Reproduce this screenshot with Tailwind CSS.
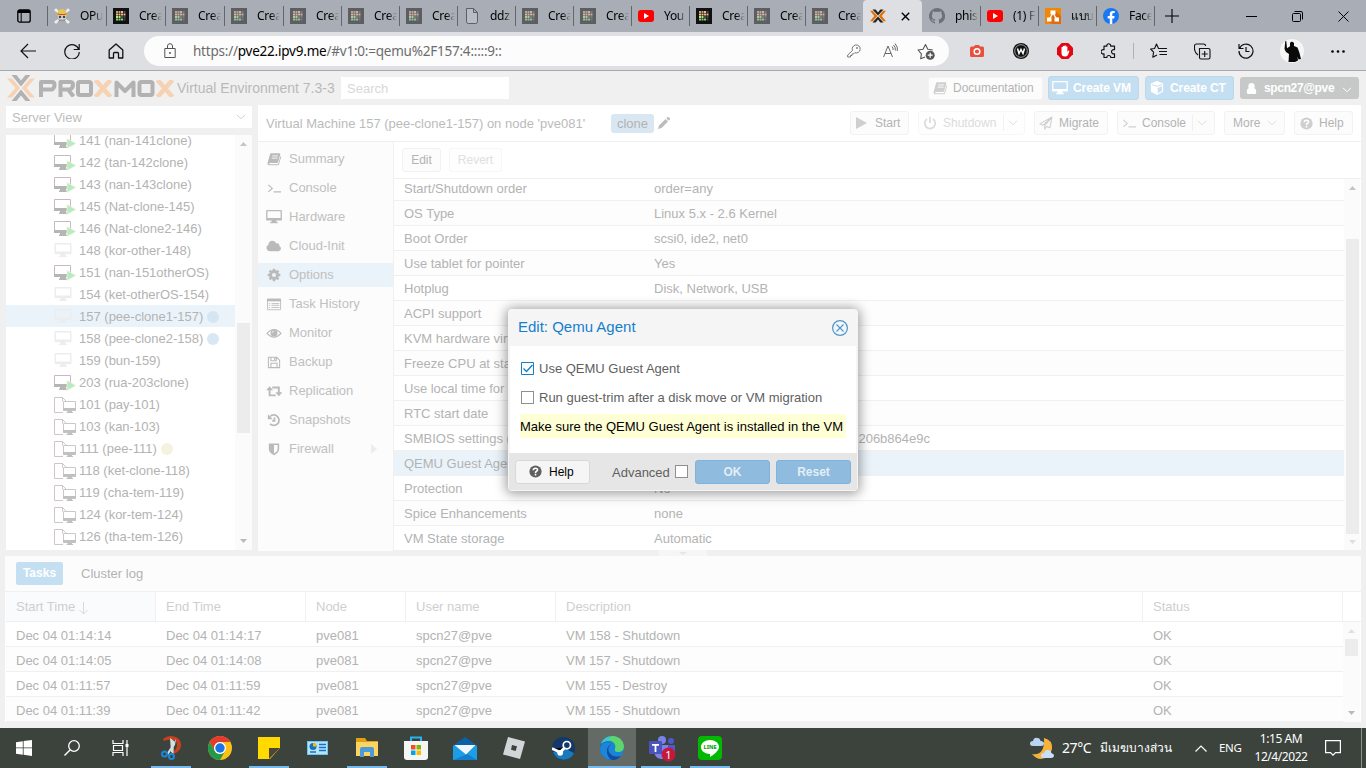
<!DOCTYPE html>
<html lang="en">
<head>
<meta charset="utf-8">
<title>pve081 - Proxmox Virtual Environment</title>
<script src="https://cdn.jsdelivr.net/npm/@tailwindcss/browser@4"></script>
</head>
<body class="w-[1366px] h-[768px] overflow-hidden flex flex-col bg-[#f0f0f0] font-['Liberation_Sans',Arial,sans-serif] text-[13px] leading-4 text-[#b3b3b3] whitespace-nowrap">

<svg class="hidden">
  <symbol id="grid" viewBox="0 0 16 16"><path fill="#111" d="M0 0h16v16H0z"/><path fill="#d9907f" d="M3 3h2v2H3zM5.500 3h2v2h-2z"/><path fill="#f0b49a" d="M8 3h2v2H8zM8 5.500h2v2H8zM10.500 5.500h2v2h-2z"/><path fill="#e8d27a" d="M3 5.500h2v2H3zM5.500 5.500h2v2h-2z"/><path fill="#c6e08a" d="M3 8h2v2H3zM5.500 8h2v2h-2z"/><path fill="#7ed67e" d="M3 10.500h2v2H3zM5.500 10.500h2v2h-2zM8 10.500h2v2H8z"/><path fill="#4a4a40" d="M10.500 3h2v2h-2zM8 8h2v2H8zM10.500 8h2v2h-2zM10.500 10.500h2v2h-2z"/></symbol>
  <symbol id="yt" viewBox="0 0 16 16"><rect y="2" width="16" height="12" rx="3" fill="#f00"/><path fill="#fff" d="M6 5l5 3-5 3z"/></symbol>
  <symbol id="skull" viewBox="0 0 16 16"><path stroke="#e8e8e8" stroke-width="2" d="M2 2l12 12M14 2L2 14"/><g fill="#eee"><circle cx="2" cy="2" r="1.6"/><circle cx="14" cy="2" r="1.6"/><circle cx="2" cy="14" r="1.6"/><circle cx="14" cy="14" r="1.6"/></g><circle cx="8" cy="8" r="5" fill="#ddd" stroke="#8c8c8c" stroke-width=".7"/><path fill="#e7c64c" d="M1.500 7q1-1 2-1 .5-5 4.500-5t4.500 5q1 0 2 1-6.500 1.500-13 0z"/><path fill="#c0504a" d="M3.500 5.500q4.500 1.200 9 0v1q-4.500 1.200-9 0z"/><circle cx="6" cy="9" r="1.300" fill="#444"/><circle cx="10" cy="9" r="1.300" fill="#444"/><path stroke="#777" stroke-width=".8" d="M5 12h6"/></symbol>
  <symbol id="doc" viewBox="0 0 16 16"><path fill="#b9bcc2" stroke="#5c5f66" d="M2.500 .5h7l4 4v9q0 2-2 2h-7q-2 0-2-2zM9.500 .5v4h4"/></symbol>
  <symbol id="px" viewBox="0 0 16 16"><path fill="#222" d="M2.500 1.500h3.200L8 4.400l2.300-2.900h3.200L8 7.600zM2.500 14.500h3.200L8 11.600l2.300 2.900h3.200L8 8.400z"/><path fill="#e57000" d="M0 2.800h2.700L7.400 8l-4.700 5.200H0L4.300 8zM16 2.800h-2.700L8.600 8l4.700 5.200H16L11.700 8z"/></symbol>
  <symbol id="gh" viewBox="0 0 16 16"><path fill="#6d7279" d="M8 0a8 8 0 0 0-2.500 15.600c.4.100.5-.2.500-.4v-1.500c-2.200.5-2.700-.9-2.700-.9-.4-.9-.9-1.200-.9-1.200-.7-.5.100-.5.100-.5.800.1 1.200.8 1.200.8.700 1.200 1.900.9 2.300.7.100-.5.300-.9.500-1.100-1.800-.2-3.600-.9-3.600-4 0-.9.300-1.600.8-2.100-.1-.2-.4-1 .1-2.100 0 0 .7-.2 2.200.8a7.600 7.600 0 0 1 4 0c1.500-1 2.200-.8 2.200-.8.4 1.100.2 1.900.1 2.100.5.500.8 1.200.8 2.100 0 3.100-1.900 3.800-3.700 4 .3.200.6.700.6 1.500v2.200c0 .200.100.500.600.400A8 8 0 0 0 8 0z"/></symbol>
  <symbol id="drawio" viewBox="0 0 16 16"><path fill="#f08705" d="M0 0h16v16H0z"/><path fill="#df6c0c" d="M10 3l6 5v8H7L3 13z"/><path stroke="#fff" stroke-width="1.300" d="M8 5L4.500 11M8 5l3.500 6"/><path fill="#fff" d="M5.500 2.500h5v4h-5zM2 9.500h4.500v4H2zM9.500 9.500H14v4H9.500z"/></symbol>
  <symbol id="fb" viewBox="0 0 16 16"><circle cx="8" cy="8" r="8" fill="#1877f2"/><path fill="#fff" d="M6.800 16v-5.600H4.700V8h2.100V6.200c0-2.100 1.200-3.200 3.100-3.200l1.800.1v2h-1c-1 0-1.400.6-1.400 1.300V8h2.300l-.4 2.400H9.300V16z"/></symbol>

  <symbol id="desk" viewBox="0 0 18 16"><path fill="currentColor" fill-rule="evenodd" d="M1 0h16q1 0 1 1v10q0 1-1 1h-5.500l.8 2h1.200v1h-9v-1h1.200l.8-2H1q-1 0-1-1V1q0-1 1-1zm.5 1.500v7.500h15V1.500z"/></symbol>
  <symbol id="book" viewBox="0 0 16 16"><path fill="currentColor" d="M4.500 1.500h10q1 0 .7 1l-2.500 9q-.3 1-1.300 1H3.300q-1 0-.9.700t.9.700h9l.5-.5L15.500 4.500q1 .3.600 1.500l-2.400 8q-.3 1-1.300 1H2.500Q.5 15 .6 13q0-.8.400-1.700L3.300 3q.4-1.500 1.200-1.500z"/><path stroke="#fff" stroke-width="1" d="M6 4.500h6.500M5.400 7H12"/></symbol>
  <symbol id="term" viewBox="0 0 16 16"><path fill="none" stroke="currentColor" stroke-width="1.300" d="M1.500 4.500L6 8.500l-4.500 4M7.500 12.500H16"/></symbol>
  <symbol id="cloud" viewBox="0 0 18 16"><path fill="currentColor" d="M4 14a4 4 0 0 1-1.500-7.500C2.600 4 4.500 2 7 2c2 0 3.700 1.100 4.500 3 2-.7 4 .6 3.700 3A3.200 3.200 0 0 1 14.500 14z"/></symbol>
  <symbol id="gear" viewBox="0 0 16 16"><circle cx="8" cy="8" r="4" fill="none" stroke="currentColor" stroke-width="3.200"/><g stroke="currentColor" stroke-width="2.800"><path d="M8 .8v3M8 12.200v3M.8 8h3M12.200 8h3M2.900 2.900l2 2M11.100 11.100l2 2M2.900 13.100l2-2M11.100 4.900l2-2"/></g></symbol>
  <symbol id="list" viewBox="0 0 18 16"><path fill="none" stroke="currentColor" d="M1.500 2.500h15v12h-15z"/><path fill="currentColor" d="M1 2h16v3H1z"/><path stroke="currentColor" d="M3 7.500h1.500M6 7.500h9M3 9.500h1.500M6 9.500h9M3 12h1.500M6 12h9"/></symbol>
  <symbol id="eye" viewBox="0 0 18 16"><path fill="none" stroke="currentColor" stroke-width="1.300" d="M1 8.500Q9-.5 17 8.500 9 17 1 8.500z"/><circle cx="9" cy="8" r="4" fill="currentColor"/><path fill="none" stroke="#fff" stroke-width=".8" d="M6.800 8A2.200 2.200 0 0 1 9 5.800"/></symbol>
  <symbol id="floppy" viewBox="0 0 16 16"><path fill="none" stroke="currentColor" stroke-width="1.200" d="M1.600 2.600h9.400l3.400 3.400v8.400H1.600zM4.500 14v-4.500h7V14M4.500 3v3.500h6V3"/><path fill="currentColor" d="M8 3h1.500v2.500H8z"/></symbol>
  <symbol id="retweet" viewBox="0 0 18 16"><path fill="none" stroke="currentColor" stroke-width="2.200" d="M4 6v7h7M7 4h7.500v7"/><path fill="currentColor" d="M0 7l4-4.500L8 7zM10.500 9.500h8L14.500 14z"/></symbol>
  <symbol id="hist" viewBox="0 0 16 16"><path fill="none" stroke="currentColor" stroke-width="2" d="M3.500 4A6 6 0 1 1 3.500 12.500M8.500 5v4H6"/><path fill="currentColor" d="M1 1.500V7h5.500z"/></symbol>
  <symbol id="shield" viewBox="0 0 16 16"><path fill="none" stroke="currentColor" stroke-width="1.800" d="M3 2.500h10V8c0 3-2 4.500-5 6-3-1.500-5-3-5-6z"/><path fill="currentColor" d="M3 2.500h5V14c-3-1.500-5-3-5-6z"/></symbol>
  <symbol id="cube" viewBox="0 0 16 16"><path fill="currentColor" d="M8 0l7 2.800v9.400L8 16l-7-3.800V2.800z"/><path fill="none" stroke="#c5dff2" stroke-width="1.100" d="M2.300 4L8 6.200 13.700 4"/><path fill="#c5dff2" d="M8.800 8l4.800-2v5.300l-4.800 2.600z"/></symbol>
  <symbol id="user" viewBox="0 0 14 16"><circle cx="7" cy="5" r="4" fill="currentColor"/><path fill="currentColor" d="M1 13q0-5 3-5.500 3 2 6 0 3 .5 3 5.500 0 2-2 2H3q-2 0-2-2z"/></symbol>
  <symbol id="power" viewBox="0 0 16 16"><path fill="none" stroke="currentColor" stroke-width="2" d="M4.500 3.500a6 6 0 1 0 7 0M8 .8V8"/></symbol>
  <symbol id="plane" viewBox="0 0 16 16"><path fill="none" stroke="currentColor" stroke-width="1.200" stroke-linejoin="round" d="M14.800 1.200L1 9l3.500 1.600L14.800 1.200 6.500 11v4l2-3 4 1.500z"/></symbol>
  <symbol id="help" viewBox="0 0 16 16"><circle cx="8" cy="8" r="7.500" fill="currentColor"/><path fill="none" stroke="#fff" stroke-width="2" d="M5.300 6.500C5.500 3.200 10.500 3.300 10.500 6 10.500 7.700 8 7.600 8 9.700M8 10.900v2"/></symbol>
  <symbol id="chev" viewBox="0 0 10 6"><path fill="none" stroke="currentColor" d="M1 .8l4 4 4-4"/></symbol>
  <symbol id="vmrun" viewBox="0 0 22 16"><path fill="none" stroke="#c6b9c1" d="M.5 .5h16v11H.5z"/><path fill="#b5b5b5" d="M0 9h17v3H0zM6 12h6v1.500H6zM5 13.500h8v1.500H5z"/><path fill="#b6ebc4" stroke="#fbf3d8" stroke-width=".7" d="M13 5.500l9 5-9 5z"/></symbol>
  <symbol id="tmpl" viewBox="0 0 22 16"><path fill="none" stroke="#cdc6cb" d="M9 15.500H.5V.5h8l4 4M8.500 .5v4M9.500 4.500h12v9h-12z"/><path fill="#c0c0c0" d="M9 11h13v2.500H9zM13.500 13.500h4.500V15h1v1h-6.500v-1h1z"/></symbol>
</svg>

<!-- browser tabs -->
<header class="h-8 shrink-0 flex bg-[#a9adb5] text-black font-['Noto_Sans',sans-serif] text-[12px]">
  <div class="w-[47px] flex items-center pl-[17px]"><svg class="size-[14px]" viewBox="0 0 14 14"><rect x=".8" y=".8" width="12.400" height="12.400" rx="2" fill="none" stroke="#000" stroke-width="1.300"/><path d="M1 1h12v3H1z" fill="#000"/><path d="M4.200 4v9" stroke="#000"/></svg></div>
  <div id="tabs" class="flex"></div>
  <div class="w-[59px] bg-[#dedfe3] flex items-center rounded-t pl-[7px]"><svg class="size-4"><use href="#px"/></svg><svg class="ml-[15px] size-[9px]" viewBox="0 0 9 9"><path stroke="#000" stroke-width="1.400" d="M.8.8l7.400 7.400M8.200.8L.8 8.200"/></svg></div>
  <div id="tabs2" class="flex"></div>
  <div class="w-[1px] h-5 mt-[6px] bg-[#63666b]"></div>
  <div class="flex-1 flex items-center pl-[10px]">
    <svg class="size-[14px]" viewBox="0 0 14 14"><path stroke="#000" stroke-width="1.100" d="M7 0v14M0 7h14"/></svg>
    <svg class="ml-[67px] w-[11px] h-3" viewBox="0 0 11 12"><path stroke="#000" d="M0 6.500h11"/></svg>
    <svg class="ml-[35px] size-[11px]" viewBox="0 0 11 11"><path fill="none" stroke="#000" d="M1.500 2.500h6q1 0 1 1v6q0 1-1 1h-6q-1 0-1-1v-6q0-1 1-1zM2.500 .5H9q1.500 0 1.500 1.500v6.500"/></svg>
    <svg class="ml-[35px] size-[11px]" viewBox="0 0 11 11"><path stroke="#000" d="M.5.5l10 10M10.500.5l-10 10"/></svg>
  </div>
</header>

<!-- address bar -->
<nav class="h-[39px] shrink-0 flex items-center bg-[#dedfe3] border-b border-[#a9a8b0] text-[#111]">
  <svg class="ml-5 w-4 h-4" viewBox="0 0 16 16"><path fill="none" stroke="currentColor" stroke-width="1.200" d="M16 8H1M8 1L1 8l7 7"/></svg>
  <svg class="ml-7 size-4" viewBox="0 0 16 16"><path fill="none" stroke="currentColor" stroke-width="1.200" d="M14.800 6.500A7.200 7.200 0 1 0 15.200 9M15.200 1v5.500H9.700"/></svg>
  <svg class="ml-7 size-4" viewBox="0 0 16 16"><path fill="none" stroke="currentColor" stroke-width="1.300" stroke-linejoin="round" d="M1.200 7L8 1l6.800 6v8h-4.300v-4.500q0-1-1-1h-3q-1 0-1 1V15H1.200z"/></svg>
  <div class="ml-5 w-[805px] h-[30px] rounded-full bg-[#fcfcfc] flex items-center pl-5">
    <svg class="w-3 h-4 text-[#555]" viewBox="0 0 12 16"><path fill="none" stroke="currentColor" d="M.8 5.500h10.400v9H.8zM3.500 5.500V3q0-2.300 2.500-2.300T8.500 3v2.500"/><circle cx="6" cy="10" r="1" fill="currentColor"/></svg>
    <div class="ml-[17px] w-[640px] font-['Noto_Sans',sans-serif] text-[13.500px] leading-5 text-[#6c6c6c] tracking-[-0.22px]">https://<span class="text-black">pve22.ipv9.me</span>/#v1:0:=qemu%2F157:4:::::9::</div>
    <svg class="ml-[14px] size-[14px] text-[#767676]" viewBox="0 0 14 14"><path fill="none" stroke="currentColor" d="M5.500 6.500a4 4 0 1 1 2.300 2.200L6.500 10H5v1.500H3.500V13H.7v-2z"/><circle cx="10" cy="4" r=".9" fill="currentColor"/></svg>
    <svg class="ml-[22px] w-[15px] h-4 text-[#666]" viewBox="0 0 15 16"><path fill="none" stroke="currentColor" d="M.6 14L5 3l4.500 11M2 10.500h6M9 3.500q1.500 1.500 1 3.500M10.500 2q2.300 2 1.800 5.500M12 .5Q15.300 4 14.300 8"/></svg>
    <svg class="ml-[19px] w-[18px] h-[18px] text-[#555]" viewBox="0 0 18 18"><path fill="none" stroke="currentColor" stroke-width="1.100" stroke-linejoin="round" d="M8 15l-4.300 1.800.7-5L1 8l5-.8L8.500 2.500l2.300 4.700 5 .8"/><circle cx="13.200" cy="13.200" r="4.500" fill="currentColor"/><path stroke="#fff" stroke-width="1.200" d="M13.200 10.700v5M10.700 13.200h5"/></svg>
  </div>
  <svg class="ml-[21px] w-[14px] h-3" viewBox="0 0 14 12"><path fill="#e8503f" d="M1.500 1.500h2.500L5 0h4l1 1.500h2.500q1.500 0 1.500 1.500v7.500q0 1.500-1.500 1.500h-11Q0 12 0 10.500V3q0-1.500 1.500-1.500z"/><circle cx="7" cy="6.500" r="2.800" fill="none" stroke="#fff" stroke-width="1.500"/></svg>
  <svg class="ml-[29px] size-4" viewBox="0 0 16 16"><circle cx="8" cy="8" r="8" fill="#111"/><circle cx="8" cy="8" r="6.300" fill="none" stroke="#ddd" stroke-width=".7"/><path fill="none" stroke="#fff" stroke-width="1.500" d="M4.500 5.500L6 10.500l2-4 2 4 1.500-5"/></svg>
  <svg class="ml-7 size-4" viewBox="0 0 16 16"><path fill="#e30613" d="M4.700 0h6.600L16 4.700v6.600L11.300 16H4.700L0 11.300V4.700z"/><path fill="#fff" d="M4.500 8V4.300q.7-1 1.400 0V3.200q.8-1 1.500 0v-.5q.8-1 1.500 0v1q.8-1 1.500 0V9l1-1.500q1-.3 1 .5L11 12q-1 1.500-3 1.500-3.500 0-3.500-3.500z"/></svg>
  <svg class="ml-7 size-4" viewBox="0 0 16 16"><path fill="none" stroke="currentColor" stroke-width="1.200" stroke-linejoin="round" d="M3 3.200h2.800a2 2 0 1 1 3.900 0h3.800v3.500a2.200 2.200 0 1 0 0 4.100v3.700H9.800a2 2 0 0 0-4 0H3v-3.700a2.200 2.200 0 1 1 0-4.100z"/></svg>
  <div class="ml-4 w-[1px] h-4 bg-[#b0b1b5]"></div>
  <svg class="ml-4 w-[17px] h-4" viewBox="0 0 17 16"><path fill="none" stroke="currentColor" stroke-width="1.100" stroke-linejoin="round" d="M10 5.500H8.500L6.500 1 4.600 5.500.6 6l3 3.200-.8 5L7 12M10 5.500h7M9 8.500h8M9.500 11.500H17"/></svg>
  <svg class="ml-[27px] size-[17px]" viewBox="0 0 17 17"><path fill="none" stroke="currentColor" stroke-width="1.100" d="M5.500 5.500h9q1.500 0 1.500 1.500v7.500q0 1.500-1.500 1.500H7q-1.500 0-1.500-1.500zM4 12Q.5 9.500.5 6V3Q.5 1 2.500 1h7q2 0 2.200 2M10.700 8v6M7.700 11h6"/></svg>
  <svg class="ml-[27px] size-4" viewBox="0 0 16 16"><path fill="none" stroke="currentColor" stroke-width="1.200" d="M1.500 5.500A7 7 0 1 1 1 8M1 1v4.500h4.500M8 4v4.500h3.500"/></svg>
  <svg class="ml-[26px] size-6" viewBox="0 0 24 24"><circle cx="12" cy="12" r="12" fill="#f6f6f6"/><path fill="#0a0a0a" d="M5.300 2l1 .3.700 7 3-2V4q1.700-2.500 4 0v3l3.500 1.500L19.500 14l1.500 6-2.500.5-1-3 .5 4-3 1.500H8.500l.5-8-3-2-1.500-3z"/></svg>
  <svg class="ml-[26px] w-4 h-[3px]" viewBox="0 0 16 3"><circle cx="2.500" cy="1.500" r="1.300"/><circle cx="8" cy="1.500" r="1.300"/><circle cx="13.500" cy="1.500" r="1.300"/></svg>
</nav>

<!-- product header -->
<div class="h-[34px] shrink-0 flex items-center pl-[7px] pr-[7px] text-[12px]">
  <svg class="w-[28px] h-[26px]" viewBox="0 0 28 26"><path fill="#b2b2b2" d="M4.500 0h5L14 5.500 18.500 0h5L14 11.500zM4.500 26h5l4.500-5.500 4.500 5.500h5L14 14.500z"/><path fill="#f6d2b2" d="M0 3.500h5L13 13 5 22.500H0L8.500 13zM28 3.500h-5L15 13l8 9.500h5L19.500 13z"/></svg>
  <svg class="ml-1 w-[136px] h-[17px]" viewBox="0 0 136 17" aria-label="PROXMOX"><g fill="none" stroke="#b2b2b2" stroke-width="4" stroke-linejoin="round"><path d="M2 17V2h11q2.500 0 2.500 3t-2.500 4.500H2M21.500 17V2H31q3 0 3 3t-3 4.500h-9M29 9.500l5.500 7"/><rect x="39" y="2" width="13" height="13" rx="2"/><path d="M77.500 17V2.500L86 11l8.500-8.500V17"/><rect x="100.500" y="2" width="13" height="13" rx="2"/></g><g fill="none" stroke="#f6d2b2" stroke-width="4.500"><path d="M56.500 0l15 17M71.500 0l-15 17M118.500 0l15 17M133.500 0l-15 17"/></g></svg>
  <div class="ml-[2px] w-[164px] text-[14px] text-[#b9b9b9]">Virtual Environment 7.3-3</div>
  <div class="w-[168px] h-[22px] bg-white text-[13px] text-[#d8d8d8] pl-[6px] leading-[23px]">Search</div>
  <div class="ml-auto w-[115px] h-[23px] bg-[#fcfcfc] border border-[#f3f3f3] rounded-[3px] flex items-center pl-[4px]"><svg class="size-[14px] text-[#cfcfcf]"><use href="#book"/></svg><span class="ml-[6px]">Documentation</span></div>
  <div class="ml-[5px] w-[91px] h-6 bg-[#c5dff2] border border-[#b9d7ee] rounded-[3px] flex items-center pl-[3px] text-white font-bold tracking-[-0.1px]"><svg class="w-4 h-[14px]"><use href="#desk"/></svg><span class="ml-[5px]">Create VM</span></div>
  <div class="ml-[6px] w-[89px] h-6 bg-[#c5dff2] border border-[#b9d7ee] rounded-[3px] flex items-center pl-[4px] text-white font-bold tracking-[-0.1px]"><svg class="size-[14px]"><use href="#cube"/></svg><span class="ml-[6px]">Create CT</span></div>
  <div class="ml-[6px] w-[119px] h-[22px] bg-[#c7c9c9] rounded-[3px] flex items-center pl-[6px] text-white font-bold tracking-[-0.35px]"><svg class="w-[11px] h-[13px]"><use href="#user"/></svg><span class="ml-[7px] w-[70px]">spcn27@pve</span><svg class="ml-[8px] mt-1 w-[10px] h-[6px]"><use href="#chev"/></svg></div>
</div>

<main class="h-[445px] shrink-0 flex pl-[6px]">
  <!-- resource tree -->
  <aside class="w-[246px] shrink-0 flex flex-col">
    <div class="mt-px h-[22px] bg-white flex items-center justify-between pl-[6px] pr-[6px]"><span class="pt-[2px] text-[#bdbdbd]">Server View</span><svg class="w-[10px] h-[6px] text-[#cfcfcf]"><use href="#chev"/></svg></div>
    <div class="mt-[7px] h-[415px] flex bg-white overflow-hidden">
      <div id="tree" class="w-[229px] -mt-[6px]"></div>
      <div class="w-[17px] bg-[#fbfbfb] flex flex-col items-center">
        <svg class="mt-[7px] w-[7px] h-1" viewBox="0 0 7 4"><path fill="#c4c4c4" d="M0 4l3.500-4L7 4z"/></svg>
        <div class="mt-[177px] w-[13px] h-[110px] bg-[#ececec]"></div>
        <svg class="mt-[106px] w-[7px] h-1" viewBox="0 0 7 4"><path fill="#b9b9b9" d="M0 0l3.500 4L7 0z"/></svg>
      </div>
    </div>
  </aside>

  <!-- guest panel -->
  <section class="ml-[6px] w-[1103px] flex flex-col bg-white">
    <div class="h-[37px] border-b border-[#f0f0f0] flex items-center pl-2 pr-2 text-[12px]">
      <span class="w-[345px] pt-[2px] text-[13px] text-[#bbb]">Virtual Machine 157 (pee-clone1-157) on node 'pve081'</span>
      <span class="w-[43px] h-[19px] rounded-[3px] bg-[#d9e7f2] text-center text-[13px] leading-[20px]">clone</span>
      <svg class="ml-1 size-3" viewBox="0 0 12 12"><path fill="#bcbcbc" d="M8.300 1.200L9.500 0q.5-.3 1 0L12 1.500q.3.500 0 1l-1.200 1.200zM7.500 2l2.500 2.500L3.500 11 0 12l1-3.500z"/></svg>
      <div class="ml-auto w-[59px] h-6 bg-[#fcfcfc] border border-[#f2f2f2] rounded-[3px] flex items-center pl-[5px]"><svg class="w-[11px] h-3 text-[#cfcfcf]" viewBox="0 0 11 12"><path fill="currentColor" d="M0 0l11 6-11 6z"/></svg><span class="ml-[8px]">Start</span></div>
      <div class="ml-[9px] w-[107px] h-6 bg-[#fefefe] border border-[#f7f7f7] rounded-[3px] flex items-center pl-[4px] text-[#dcdcdc]"><svg class="size-[14px]"><use href="#power"/></svg><span class="ml-[6px] w-[60px]">Shutdown</span><i class="w-px h-4 bg-[#f2f2f2]"></i><svg class="ml-[4px] w-[10px] h-[6px]"><use href="#chev"/></svg></div>
      <div class="ml-[9px] w-[74px] h-6 bg-[#fcfcfc] border border-[#f2f2f2] rounded-[3px] flex items-center pl-[4px]"><svg class="size-[14px] text-[#cfcfcf]"><use href="#plane"/></svg><span class="ml-[6px]">Migrate</span></div>
      <div class="ml-[9px] w-[98px] h-6 bg-[#fcfcfc] border border-[#f2f2f2] rounded-[3px] flex items-center pl-[4px]"><svg class="size-[14px] text-[#cfcfcf]"><use href="#term"/></svg><span class="ml-[6px] w-[50px]">Console</span><i class="w-px h-4 bg-[#f0f0f0]"></i><svg class="ml-[4px] w-[10px] h-[6px] text-[#dcdcdc]"><use href="#chev"/></svg></div>
      <div class="ml-[9px] w-[61px] h-6 bg-[#fcfcfc] border border-[#f2f2f2] rounded-[3px] flex items-center pl-[8px]"><span class="w-[34px]">More</span><svg class="w-[10px] h-[6px] text-[#dcdcdc]"><use href="#chev"/></svg></div>
      <div class="ml-[9px] w-[59px] h-6 bg-[#fcfcfc] border border-[#f2f2f2] rounded-[3px] flex items-center pl-[5px]"><svg class="size-[13px] text-[#cfcfcf]"><use href="#help"/></svg><span class="ml-[6px]">Help</span></div>
    </div>
    <div class="h-[408px] flex">
      <div id="menu" class="w-[136px] h-[409px] bg-[#fcfcfc] border-r border-[#f0f0f0] flex flex-col gap-[5px] pt-[5px] text-[#c0c0c0]"></div>
      <div class="w-[967px] flex flex-col">
        <div class="h-[37px] border-b border-[#f0f0f0] flex items-center pl-[8px] gap-2 text-[12px]">
          <div class="w-[39px] h-6 bg-[#fcfcfc] border border-[#f2f2f2] rounded-[3px] text-center leading-[22px]">Edit</div>
          <div class="w-[53px] h-6 bg-[#fefefe] border border-[#f7f7f7] rounded-[3px] text-center leading-[22px] text-[#e0e0e0]">Revert</div>
        </div>
        <div class="h-[371px] flex overflow-hidden">
          <div id="opts" class="w-[950px] -mt-[3px]"></div>
          <div class="w-4 bg-[#fbfbfb] flex flex-col items-center">
            <svg class="mt-[7px] w-[7px] h-1 shrink-0" viewBox="0 0 7 4"><path fill="#c4c4c4" d="M0 4l3.500-4L7 4z"/></svg>
            <div class="mt-[49px] w-[13px] h-[295px] bg-[#ececec] shrink-0"></div>
            <svg class="mt-[6px] w-[7px] h-1 shrink-0" viewBox="0 0 7 4"><path fill="#dedede" d="M0 0l3.500 4L7 0z"/></svg>
          </div>
        </div>
      </div>
    </div>
  </section>
</main>

<div class="h-[6px] shrink-0 pl-[659px]"><div class="w-12 h-[6px] bg-[#f6f6f6] flex justify-center"><svg class="mt-[2px] w-2 h-[3px]" viewBox="0 0 8 3"><path fill="#e6e6e6" d="M0 0h8L4 3z"/></svg></div></div>

<!-- task log -->
<section class="h-[166px] shrink-0 ml-[5px] w-[1356px] bg-white flex flex-col">
  <div class="h-9 shrink-0 bg-[#fcfcfc] border-b border-[#f0f0f0] flex items-center pl-[11px]">
    <div class="w-[47px] h-[23px] rounded-[2px] bg-[#c5dff2] text-white font-bold text-center text-[12px] leading-[23px]">Tasks</div>
    <div class="ml-[18px]">Cluster log</div>
  </div>
  <div class="h-[30px] shrink-0 flex border-b border-[#f0f0f0] leading-[29px] text-[#cfcfcf] pl-px">
    <div class="w-[150px] bg-[#fafbfd] border-r border-[#f0f0f0] pl-[10px] flex items-center">Start Time<svg class="ml-1 mt-1 w-[9px] h-[13px]" viewBox="0 0 9 13"><path fill="none" stroke="#d8d8d8" d="M4.500 0v12M.5 8l4 4 4-4"/></svg></div>
    <div class="w-[150px] border-r border-[#f0f0f0] pl-[10px]">End Time</div>
    <div class="w-[100px] border-r border-[#f0f0f0] pl-[10px]">Node</div>
    <div class="w-[150px] border-r border-[#f0f0f0] pl-[10px]">User name</div>
    <div class="w-[587px] border-r border-[#f0f0f0] pl-[10px]">Description</div>
    <div class="w-[200px] border-r border-[#f0f0f0] pl-[10px]">Status</div>
  </div>
  <div class="h-[100px] flex pl-px">
    <div id="log" class="w-[1337px]"></div>
    <div class="w-[17px] bg-[#fbfbfb] flex flex-col items-center">
      <svg class="mt-[7px] w-[7px] h-1" viewBox="0 0 7 4"><path fill="#e0e0e0" d="M0 4l3.500-4L7 4z"/></svg>
      <div class="mt-[6px] w-[13px] h-[17px] bg-[#ececec]"></div>
      <svg class="mt-[55px] w-[7px] h-1" viewBox="0 0 7 4"><path fill="#b9b9b9" d="M0 0l3.500 4L7 0z"/></svg>
    </div>
  </div>
</section>
<div class="h-[6px] shrink-0"></div>

<!-- taskbar -->
<footer class="h-10 shrink-0 flex bg-[#3b433c] text-white font-['Noto_Sans',sans-serif] text-[12px]">
  <div class="w-12 flex items-center justify-center"><svg class="size-4" viewBox="0 0 16 16"><path fill="#fff" d="M0 2.200L6.800 1.200v6.300H0zM7.600 1.100L16 0v7.500H7.600zM0 8.300h6.800v6.400L0 13.800zM7.600 8.300H16V16l-8.400-1.200z"/></svg></div>
  <div class="w-12 flex items-center justify-center"><svg class="size-4" viewBox="0 0 16 16"><circle cx="10" cy="6" r="5.300" fill="none" stroke="#fff" stroke-width="1.300"/><path stroke="#fff" stroke-width="1.400" d="M6 10l-5.500 5.500"/></svg></div>
  <div class="w-[50px] flex items-center justify-center pr-[2px]"><svg class="w-[17px] h-4" viewBox="0 0 17 16"><path fill="none" stroke="#fff" stroke-width="1.200" d="M1 0v3.500h10V0M1 16v-3.500h10V16M1.500 5.500h9v5h-9zM15 0v16"/><path fill="#fff" d="M13.500 4h3v3h-3z"/></svg></div>
  <div class="w-[49px] flex flex-col items-center"><svg class="mt-2 size-6" viewBox="0 0 24 24"><path fill="#c8411f" d="M4 3Q9-1 15 .5q7 1.500 7 8.500 0 6-7 9l-1-2.500q4-2 4-6.500 0-5-5-5-4-1-8 1z"/><path fill="#d8dde0" d="M11 2l4 3-.5 13-2.500-2zM17 3l-1 6-7 10-1-2z"/><g fill="none" stroke="#1c87d6" stroke-width="2"><circle cx="5.500" cy="18" r="2.500"/><circle cx="12.500" cy="20.500" r="2.500"/></g></svg><div class="mt-auto w-10 h-[2px] bg-[#76b9ed]"></div></div>
  <div class="w-[49px] flex items-center justify-center"><svg class="size-6" viewBox="0 0 24 24"><circle cx="12" cy="12" r="12" fill="#fbc116"/><path fill="#e33b2e" d="M1.600 6A12 12 0 0 1 22.400 6H12a6 6 0 0 0-5.200 9z"/><path fill="#229a49" d="M1.600 6A12 12 0 0 0 12 24l5.200-9A6 6 0 0 1 6.800 15z"/><circle cx="12" cy="12" r="6" fill="#fff"/><circle cx="12" cy="12" r="4.700" fill="#1a73e8"/></svg></div>
  <div class="w-[49px] flex flex-col items-center"><svg class="mt-[9px] w-[22px] h-[22px]" viewBox="0 0 22 22"><path fill="#ffd900" d="M0 0h22v11L12 22H0z"/><path fill="#4b4638" d="M11 11h11L11 22z"/></svg><div class="mt-auto w-10 h-[2px] bg-[#76b9ed]"></div></div>
  <div class="w-[49px] flex items-center justify-center"><svg class="w-[21px] h-4" viewBox="0 0 21 16"><path fill="#6cc4f0" d="M0 1h21v14H0z"/><path fill="#b4e4fa" d="M1 2h19v12H1z"/><circle cx="6" cy="6.500" r="3.500" fill="#1b6fc0"/><path fill="#ffb900" d="M6 3v3.500h3.500A3.500 3.500 0 0 0 6 3z"/><path stroke="#1b6fc0" stroke-width="1.500" d="M12 4.500h7M12 7.500h7M12 10.500h7M3 12h6"/></svg></div>
  <div class="w-[49px] flex flex-col items-center"><svg class="mt-[10px] w-[22px] h-5" viewBox="0 0 22 20"><path fill="#e2a112" d="M0 0h9l2 3h11v6H0z"/><path fill="#fcd462" d="M0 4h22v14H0z"/><path fill="#4b9bdc" d="M4 11q0-2 2-2h10q2 0 2 2v8h-4v-5H8v5H4z"/></svg><div class="mt-auto w-10 h-[2px] bg-[#76b9ed]"></div></div>
  <div class="w-[49px] flex items-center justify-center"><svg class="w-6 h-[24px]" viewBox="0 0 24 24"><path fill="none" stroke="#26b3f2" stroke-width="2" d="M7 8V1.500h10V8"/><path fill="#f5f5f5" d="M0 5h24v16q0 3-3 3H3q-3 0-3-3z"/><path fill="#f25022" d="M7 9h4.500v4.500H7z"/><path fill="#7fba00" d="M12.500 9H17v4.500h-4.500z"/><path fill="#00a4ef" d="M7 14.500h4.500V19H7z"/><path fill="#ffb900" d="M12.500 14.500H17V19h-4.500z"/></svg></div>
  <div class="w-[49px] flex items-center justify-center"><svg class="w-6 h-[23px]" viewBox="0 0 24 23"><path fill="#0b62a8" d="M0 8.500L12 0l12 8.500z"/><path fill="#1c9ee6" d="M0 8.500h24V23H0z"/><path fill="#f3f7fa" d="M1.500 8h21L13 17.500z"/><path fill="#127fcd" d="M0 23L14.500 17 24 23z"/></svg></div>
  <div class="w-[49px] flex items-center justify-center"><svg class="size-[22px]" viewBox="0 0 22 22"><path fill="#d3d6d8" d="M5 0l17 4.500L17 22 0 17.500z"/><path fill="#3b433c" d="M9 8l5 1.300L12.700 14 8 12.700z"/></svg></div>
  <div class="w-[50px] flex items-center justify-center"><svg class="size-[23px]" viewBox="0 0 24 24"><circle cx="12" cy="12" r="12" fill="#14386b"/><path fill="#1a79b8" d="M1 16a12 12 0 0 0 22 1L14 12z"/><circle cx="15.500" cy="8.500" r="3.800" fill="none" stroke="#fff" stroke-width="1.800"/><path stroke="#fff" stroke-width="3" d="M0 12l8.500 4 5-5"/><circle cx="8.500" cy="16.500" r="3" fill="#fff"/></svg></div>
  <div class="w-12 bg-[#646a65] flex flex-col items-center"><svg class="mt-2 size-6" viewBox="0 0 24 24"><circle cx="12" cy="12" r="12" fill="#1b83d8"/><path fill="#3fc5c8" d="M1 8Q4 0 12 0q9 0 12 10-1-3-8-5Q8 3 1 8z"/><path fill="#5fd66a" d="M12 0q10 0 12 10 0 6-6 6-4 0-3-3Q17 6 8 4z"/><path fill="#0d4f9e" d="M1 8q6-5 10 0-4 4-2 8 3 6 12 4-4 5-11 4Q0 21 0 12z"/><path fill="#1e86da" d="M0 12Q1 6 7 6q3 0 4 2-5 3-4 9 1 5 5 7Q0 23 0 12z"/></svg><div class="mt-auto w-12 h-[2px] bg-[#76b9ed]"></div></div>
  <div class="w-[50px] flex flex-col items-center"><svg class="mt-[7px] ml-1 w-[28px] h-[27px]" viewBox="0 0 28 27"><circle cx="13" cy="5" r="4" fill="#7b83eb"/><circle cx="22" cy="6" r="3" fill="#5059c9"/><path fill="#5059c9" d="M16 10h10v8q0 4-5 5z"/><path fill="#7b83eb" d="M6 10h13v9q0 5-6 5-5 0-7-4z"/><rect y="6" width="13" height="13" rx="1" fill="#4b53bc"/><path fill="#fff" d="M3 9h7v1.800H7.400V17H5.600v-6.200H3z"/><circle cx="19.500" cy="19.500" r="7" fill="#c4183c"/><text x="19.500" y="23.500" text-anchor="middle" font-size="11" fill="#fff">1</text></svg><div class="mt-auto w-10 h-[2px] bg-[#76b9ed]"></div></div>
  <div class="w-12 flex flex-col items-center"><svg class="mt-2 size-6" viewBox="0 0 24 24"><rect width="24" height="24" rx="4" fill="#00b900"/><path fill="#fff" d="M12 4c5 0 9 3 9 7 0 3.500-5 7.500-9 10v-3c-5 0-9-3-9-7s4-7 9-7z"/><text x="12" y="13.300" text-anchor="middle" font-size="5.500" font-weight="800" fill="#00a000">LINE</text></svg><div class="mt-auto w-10 h-[2px] bg-[#76b9ed]"></div></div>
  <div class="flex-1 flex items-center">
    <svg class="ml-[296px] w-6 h-[23px]" viewBox="0 0 24 23"><path fill="#f6b23a" d="M14 1q9 2 8 11-2 9-11 10-5 0-9-5 13 2 12-16z"/><path fill="#b9d4f3" d="M3 9q-3 0-3-2.500T3 4Q4 0 7.500 1 10 1 10.500 4 14 4 14 6.500T11 9z"/><path fill="#c9dff7" d="M14 21q-3 0-3-2.500T14 16q1-3.500 4-3 3 .3 3.300 3Q24 16.500 24 18.500T21 21z"/></svg>
    <span class="ml-2 w-[38px] text-[14px] tracking-[-0.4px]">27°C</span>
    <span class="w-[71px] text-[12px]">มีเมฆบางส่วน</span>
    <svg class="ml-[24px] w-3 h-[7px]" viewBox="0 0 12 7"><path fill="none" stroke="#fff" stroke-width="1.200" d="M.5 6.500L6 1l5.500 5.500"/></svg>
    <span class="ml-[12px] w-[24px] text-[11.500px] tracking-[-0.3px]">ENG</span>
    <div class="ml-[6px] w-[64px] flex flex-col text-center leading-[18px] text-[12px] tracking-[-0.45px]"><span>1:15 AM</span><span>12/4/2022</span></div>
    <svg class="ml-[12px] size-4" viewBox="0 0 16 16"><path fill="none" stroke="#fff" stroke-width="1.200" d="M.6.6h14.800v12H10.500L8 15.200 5.500 12.600H.6z"/></svg>
    <div class="ml-auto mr-1 w-px h-10 bg-[#8a8f8b]"></div>
  </div>
</footer>

<!-- agent dialog -->
<div class="absolute left-[508px] top-[309px] w-[350px] h-[182px] rounded-[4px] bg-[#f5f5f5] shadow-[0_1px_12px_2px_rgba(0,0,0,0.38)] flex flex-col text-[#5f5f5f]">
  <div class="h-[37px] flex items-center justify-between px-[10px] text-[#157fcc] text-[15px]"><span class="pb-[2px]">Edit: Qemu Agent</span>
    <svg class="size-4" viewBox="0 0 16 16"><circle cx="8" cy="8" r="7.400" fill="none" stroke="#4a97cf" stroke-width="1.200"/><path stroke="#4a97cf" stroke-width="1.100" d="M4.500 4.500l7 7M11.500 4.500l-7 7"/></svg></div>
  <div class="h-[107px] mx-[2px] bg-white flex flex-col pl-[10px]">
    <div class="mt-[14px] h-4 flex items-center pl-px"><svg class="size-[13px]" viewBox="0 0 13 13"><path fill="#fff" stroke="#157fcc" d="M.5.5h12v12H.5z"/><path fill="none" stroke="#157fcc" stroke-width="1.400" d="M2.500 6.500l3 3L11.500 3"/></svg><span class="ml-[5px] pt-[2px]">Use QEMU Guest Agent</span></div>
    <div class="mt-[13px] h-4 flex items-center pl-px"><div class="size-[13px] border border-[#8f8f8f]"></div><span class="ml-[5px] pt-[2px]">Run guest-trim after a disk move or VM migration</span></div>
    <div class="mt-[9px] w-[326px] h-6 bg-[#ffffd6] text-black leading-[26px]">Make sure the QEMU Guest Agent is installed in the VM</div>
  </div>
  <div class="h-[37px] mx-px bg-[#e6e6e6] flex items-center pl-[6px]">
    <div class="w-[75px] h-6 rounded-[3px] bg-[#f5f5f5] border border-[#d8d8d8] flex items-center pl-[13px] text-[12px] text-black"><svg class="size-[13px] text-[#606060]"><use href="#help"/></svg><span class="ml-[7px]">Help</span></div>
    <span class="ml-[22px] w-[63px] pt-[2px]">Advanced</span>
    <div class="size-[13px] bg-white border border-[#8f8f8f]"></div>
    <div class="ml-[7px] w-[75px] h-6 rounded-[3px] bg-[#8fbbde] border border-[#7fb2dc] text-[#e3edf5] text-[12px] font-bold text-center leading-[22px]">OK</div>
    <div class="ml-[6px] w-[75px] h-6 rounded-[3px] bg-[#8fbbde] border border-[#7fb2dc] text-[#e3edf5] text-[12px] font-bold text-center leading-[22px]">Reset</div>
  </div>
</div>

<script>
const put = (id, html) => { document.getElementById(id).innerHTML = html; };

const tab = ([icon, label, state], i) => `<div class="${i > 3 || state === 'n' ? 'w-[58px]' : 'w-[59px]'} flex items-center">
  <i class="w-px h-5 ${state === 'first' ? 'bg-transparent' : 'bg-[#63666b]'}"></i>
  <svg class="ml-[6px] size-4 ${state === 'dim' ? 'opacity-50' : ''}"><use href="#${icon}"/></svg>
  <span class="ml-[10px] w-[23px] overflow-hidden [mask-image:linear-gradient(to_right,black_60%,transparent)] tracking-[-0.3px]">${label}</span></div>`;
put('tabs', [['skull','OPu',''],['grid','Crea',''],['grid','Crea','dim'],['grid','Crea','dim'],['grid','Crea','dim'],['grid','Crea','dim'],['grid','Crea','dim'],['doc','ddz','n'],['grid','Crea','dim'],['grid','Crea','dim'],['yt','You T','n'],['grid','Crea','n'],['grid','Crea','dim'],['grid','Crea','dim']].map(tab).join(''));
put('tabs2', [['gh','phish','first'],['yt','(1) F','n'],['drawio','แบบเ','n'],['fb','Face','n']].map((t, i) => tab(t, i + 4)).join(''));

const guests = [['r','141 (nan-141clone)'],['r','142 (tan-142clone)'],['r','143 (nan-143clone)'],['r','145 (Nat-clone-145)'],['r','146 (Nat-clone2-146)'],['s','148 (kor-other-148)'],['r','151 (nan-151otherOS)'],['s','154 (ket-otherOS-154)'],['s','157 (pee-clone1-157)','sel'],['s','158 (pee-clone2-158)','blue'],['s','159 (bun-159)'],['r','203 (rua-203clone)'],['t','101 (pay-101)'],['t','103 (kan-103)'],['t','111 (pee-111)','yellow'],['t','118 (ket-clone-118)'],['t','119 (cha-tem-119)'],['t','124 (kor-tem-124)'],['t','126 (tha-tem-126)']];
const gicon = {
  r: '<svg class="w-[22px] h-4"><use href="#vmrun"/></svg>',
  s: '<svg class="w-[18px] h-[15px] mr-1 text-[#ededed]"><use href="#desk"/></svg>',
  t: '<svg class="w-[22px] h-4"><use href="#tmpl"/></svg>'
};
const dot = { sel: '<i class="ml-1 size-3 rounded-full bg-[#d5e5f2]"></i>', blue: '<i class="ml-1 size-3 rounded-full bg-[#d9e7f2]"></i>', yellow: '<i class="ml-1 size-3 rounded-full bg-[#f5f2df]"></i>' };
put('tree', guests.map(([k, n, d]) => `<div class="h-[22px] flex items-center pl-12 pt-px ${d === 'sel' ? 'bg-[#ebf3fa]' : ''}">${gicon[k]}<span class="ml-[3px] pt-px">${n}</span>${dot[d] || ''}</div>`).join(''));

put('menu', [['book','Summary'],['term','Console'],['desk','Hardware'],['cloud','Cloud-Init'],['gear','Options'],['list','Task History'],['eye','Monitor'],['floppy','Backup'],['retweet','Replication'],['hist','Snapshots'],['shield','Firewall']].map(([i, t]) =>
  `<div class="h-6 flex items-center pl-2 ${t === 'Options' ? 'bg-[#ebf3fa]' : ''}"><svg class="w-4 h-[14px] text-[#bababa]"><use href="#${i}"/></svg><span class="ml-[7px]">${t}</span>${t === 'Firewall' ? '<svg class="ml-auto mr-[16px] w-[6px] h-[10px]" viewBox="0 0 6 10"><path fill="#ececec" d="M0 0l6 5-6 5z"/></svg>' : ''}</div>`).join(''));

put('opts', [['Start/Shutdown order','order=any'],['OS Type','Linux 5.x - 2.6 Kernel'],['Boot Order','scsi0, ide2, net0'],['Use tablet for pointer','Yes'],['Hotplug','Disk, Network, USB'],['ACPI support','Yes'],['KVM hardware virtualization','Yes'],['Freeze CPU at startup','No'],['Use local time for RTC','Default (Enabled for Windows)'],['RTC start date','now'],['SMBIOS settings (type1)','uuid=5e1b0c43-cb2d-4a97-b5c1-206b864e9c'],['QEMU Guest Agent','Default (Disabled)'],['Protection','No'],['Spice Enhancements','none'],['VM State storage','Automatic']].map(([a, b], i) =>
  `<div class="h-[25px] flex items-center border-b border-[#f0f0f0] pl-[10px] pt-[2px] ${i === 11 ? 'bg-[#ebf3fa]' : i % 2 ? 'bg-[#fdfdfd]' : ''}"><span class="w-[250px]">${a}</span><span class="${i === 10 ? 'w-[276px] text-right' : ''}">${b}</span></div>`).join(''));

put('log', [['14:14','14:17','158 - Shutdown'],['14:05','14:08','157 - Shutdown'],['11:57','11:59','155 - Destroy'],['11:39','11:42','155 - Shutdown']].map(([s, e, d], i) =>
  `<div class="h-[25px] flex border-b border-[#f0f0f0] pl-[10px] leading-[27px] ${i % 2 ? 'bg-[#fdfdfd]' : ''}"><span class="w-[150px]">Dec 04 01:${s}</span><span class="w-[150px]">Dec 04 01:${e}</span><span class="w-[100px]">pve081</span><span class="w-[150px]">spcn27@pve</span><span class="w-[587px]">VM ${d}</span><span>OK</span></div>`).join(''));
</script>
</body>
</html>
